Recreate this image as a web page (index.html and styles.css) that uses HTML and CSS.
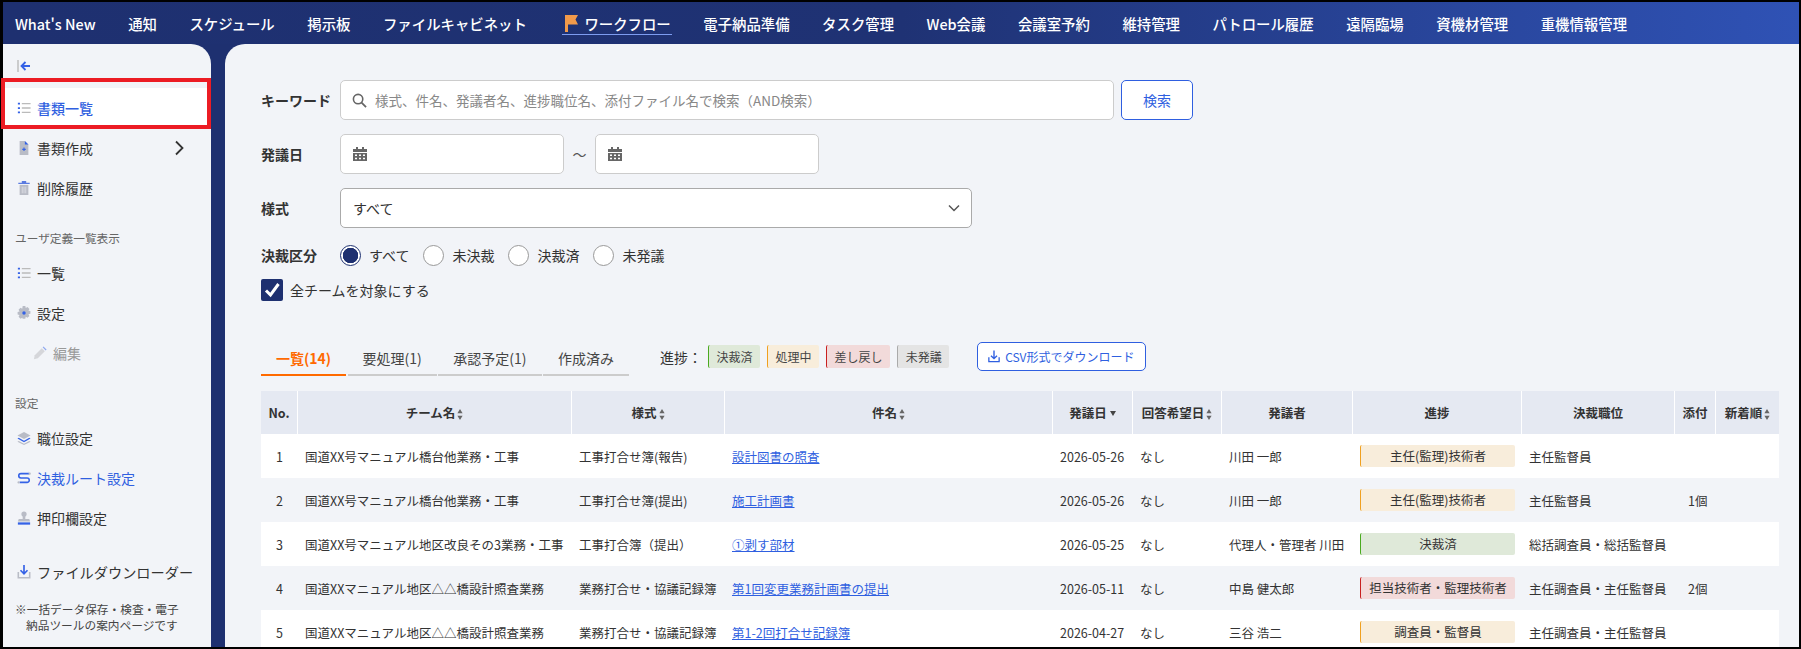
FILE: index.html
```html
<!DOCTYPE html>
<html lang="ja">
<head>
    <meta charset="UTF-8">
    <meta name="viewport" content="width=device-width, initial-scale=1.0">
    <title>ワークフロー</title>
    <link rel="stylesheet" href="styles.css">
</head>
<body>
<svg class="defs" width="0" height="0">
    <symbol id="i-list" viewBox="0 0 16 16">
        <path d="M5.5 3h10M5.5 8h10M5.5 13h10" stroke="#bbb" stroke-width="1.6"/>
        <path d="M1 2h2.4v2H1zM1 7h2.4v2H1zM1 12h2.4v2H1z" fill="#3562e6"/>
    </symbol>
    <symbol id="i-sort" viewBox="0 0 6 11">
        <path d="M3 0l2.6 4.2H.4zM3 11L.4 6.8h5.2z" fill="#666"/>
    </symbol>
    <symbol id="i-cal" viewBox="0 0 14 14">
        <path d="M3 0h2v2.5H3zM9 0h2v2.5H9zM0 2h14v3H0zM0 6h14v8H0z" fill="#666"/>
        <path d="M2 7.5h2v1.6H2zM6 7.5h2v1.6H6zM10 7.5h2v1.6h-2zM2 10.7h2v1.6H2zM6 10.7h2v1.6H6zM10 10.7h2v1.6h-2z" fill="#fff"/>
    </symbol>
</svg>

<div class="app">
    <header class="topnav">
        <a>What's New</a>
        <a>通知</a>
        <a>スケジュール</a>
        <a>掲示板</a>
        <a>ファイルキャビネット</a>
        <a class="topnav-active">
            <svg class="flag" viewBox="0 0 13 17"><path d="M0 0h13l-2.5 4.5L13 9.500H3V17H0z" fill="#f29a4a"/></svg>
            ワークフロー
        </a>
        <a>電子納品準備</a>
        <a>タスク管理</a>
        <a>Web会議</a>
        <a>会議室予約</a>
        <a>維持管理</a>
        <a>パトロール履歴</a>
        <a>遠隔臨場</a>
        <a>資機材管理</a>
        <a>重機情報管理</a>
    </header>

    <div class="layout">
        <aside class="sidebar">
            <div class="collapse">
                <svg class="icon-collapse" viewBox="0 0 14 14">
                    <path d="M1 1v12" stroke="#bbb" stroke-width="1.4"/>
                    <path d="M13 7H5M8.500 3L4.500 7l4 4" stroke="#3562e6" stroke-width="1.8" fill="none"/>
                </svg>
            </div>
            <a class="side-item side-active"><svg class="icon"><use href="#i-list"/></svg>書類一覧</a>
            <a class="side-item">
                <svg class="icon" viewBox="0 0 16 16">
                    <path d="M3 0h6l4 4v12H3z" fill="#b9bcc6"/>
                    <path d="M9 0l4 4H9z" fill="#3562e6"/>
                    <path d="M6 9.500h4M8 7.500v4" stroke="#3562e6" stroke-width="1.300"/>
                </svg>
                書類作成
                <svg class="chevron" viewBox="0 0 10 16"><path d="M2 1.500L8.500 8 2 14.500" stroke="#333" stroke-width="1.800" fill="none"/></svg>
            </a>
            <a class="side-item">
                <svg class="icon" viewBox="0 0 16 16">
                    <path d="M1.500 2h13v1.500h-13zM5.500 0h5v2h-5z" fill="#5b7be0"/>
                    <path d="M3 4.500h10V16H3z" fill="#b9bcc6"/>
                    <path d="M6 6.500v7.500M8 6.500v7.500M10 6.500v7.500" stroke="#e6e7ec" stroke-width=".8"/>
                </svg>
                削除履歴
            </a>

            <div class="side-title">ユーザ定義一覧表示</div>
            <a class="side-item"><svg class="icon"><use href="#i-list"/></svg>一覧</a>
            <a class="side-item">
                <svg class="icon" viewBox="0 0 16 16">
                    <path d="M6.500 0h3l.5 2.200 2-1.100 2.200 2.200-1.100 2 2.200.500v3l-2.200.5 1.100 2-2.200 2.200-2-1.100-.5 2.200h-3L6 13.400l-2 1.100-2.200-2.200 1.100-2L.7 9.800v-3l2.200-.5-1.100-2L4 2.100l2 1.100z" fill="#b9bcc6"/>
                    <circle cx="8" cy="8" r="2" fill="#3562e6"/>
                </svg>
                設定
            </a>
            <a class="side-item side-sub">
                <svg class="icon" viewBox="0 0 16 16">
                    <path d="M1 15l1-4.500L10 2.500l3.500 3.500-8 8z" fill="#d5d6da"/>
                    <path d="M11 1.500l1-1 3.500 3.500-1 1z" fill="#8fa8ee"/>
                </svg>
                編集
            </a>

            <div class="side-title">設定</div>
            <a class="side-item">
                <svg class="icon" viewBox="0 0 16 16">
                    <path d="M8 1l7.500 4L8 9 .5 5z" fill="#b9bcc6"/>
                    <path d="M2 7.800L8 11l6-3.200 1.500.9L8 12.800.5 8.700z" fill="#3562e6"/>
                    <path d="M2 11.300L8 14.500l6-3.200 1.500.9L8 16 .5 12.200z" fill="#b9bcc6"/>
                </svg>
                職位設定
            </a>
            <a class="side-item side-link">
                <svg class="icon" viewBox="0 0 16 16">
                    <path d="M14 3H4.500a2.500 2.500 0 0 0 0 5h7a2.500 2.500 0 0 1 0 5H3" stroke="#3562e6" stroke-width="1.800" fill="none"/>
                    <path d="M13 .8v.1M15 .8" stroke="#b9bcc6"/>
                    <circle cx="1.800" cy="13" r="1.300" fill="#b9bcc6"/>
                    <circle cx="14.500" cy="3" r="1.300" fill="#b9bcc6"/>
                </svg>
                決裁ルート設定
            </a>
            <a class="side-item">
                <svg class="icon" viewBox="0 0 16 16">
                    <circle cx="8" cy="3.500" r="3" fill="#b9bcc6"/>
                    <path d="M6.500 5.500h3V9h4.500L15 12H1l1-3h4.500z" fill="#b9bcc6"/>
                    <path d="M1 13h14v2.600H1z" fill="#3562e6"/>
                </svg>
                押印欄設定
            </a>

            <a class="side-item side-download">
                <svg class="icon" viewBox="0 0 16 16">
                    <path d="M1.500 8v6.500h13V8" stroke="#b9bcc6" stroke-width="1.800" fill="none"/>
                    <path d="M8 0v9.500M4 6l4 4 4-4" stroke="#3562e6" stroke-width="1.900" fill="none"/>
                </svg>
                ファイルダウンローダー
            </a>
            <p class="side-note">※一括データ保存・検査・電子<br><span>納品ツールの案内ページです</span></p>

            <div class="annotation"></div>
        </aside>

        <main class="content">
            <div class="field-row">
                <label class="field-label">キーワード</label>
                <div class="input input-keyword">
                    <svg class="search" viewBox="0 0 16 16"><circle cx="6.500" cy="6.500" r="5" stroke="#666" stroke-width="1.700" fill="none"/><path d="M10.200 10.200L15 15" stroke="#666" stroke-width="1.900"/></svg>
                    <span class="placeholder">様式、件名、発議者名、進捗職位名、添付ファイル名で検索（AND検索）</span>
                </div>
                <button class="btn btn-search">検索</button>
            </div>

            <div class="field-row">
                <label class="field-label">発議日</label>
                <div class="input input-date"><svg class="cal"><use href="#i-cal"/></svg></div>
                <span class="tilde">～</span>
                <div class="input input-date"><svg class="cal"><use href="#i-cal"/></svg></div>
            </div>

            <div class="field-row">
                <label class="field-label">様式</label>
                <div class="input input-select">
                    <span>すべて</span>
                    <svg class="select-arrow" viewBox="0 0 12 8"><path d="M1 1.500l5 5 5-5" stroke="#555" stroke-width="1.500" fill="none"/></svg>
                </div>
            </div>

            <div class="radio-row">
                <label class="field-label">決裁区分</label>
                <span class="radio radio-on"></span><span class="radio-text">すべて</span>
                <span class="radio"></span><span class="radio-text">未決裁</span>
                <span class="radio"></span><span class="radio-text">決裁済</span>
                <span class="radio"></span><span class="radio-text">未発議</span>
            </div>

            <div class="check-row">
                <span class="checkbox"><svg viewBox="0 0 22 22"><path d="M5 11.500l4.500 4.500L17.500 5" stroke="#fff" stroke-width="3" fill="none"/></svg></span>
                全チームを対象にする
            </div>

            <div class="toolbar">
                <div class="tabs">
                    <a class="tab tab-active">一覧(14)</a>
                    <a class="tab">要処理(1)</a>
                    <a class="tab">承認予定(1)</a>
                    <a class="tab">作成済み</a>
                </div>
                <div class="legend">
                    <span class="legend-label">進捗：</span>
                    <span class="legend-item st-done">決裁済</span>
                    <span class="legend-item st-doing">処理中</span>
                    <span class="legend-item st-back">差し戻し</span>
                    <span class="legend-item st-none">未発議</span>
                    <button class="btn btn-csv">
                        <svg viewBox="0 0 14 14"><path d="M1 8v5h12V8" stroke="#2f5fe0" stroke-width="1.500" fill="none"/><path d="M7 0v9M3.500 6L7 9.500 10.500 6" stroke="#2f5fe0" stroke-width="1.600" fill="none"/></svg>
                        CSV形式でダウンロード
                    </button>
                </div>
            </div>

            <table class="doc-table">
                <colgroup>
                    <col class="c-no"><col class="c-team"><col class="c-form"><col class="c-title">
                    <col class="c-date"><col class="c-reply"><col class="c-author"><col class="c-status">
                    <col class="c-role"><col class="c-file"><col class="c-new">
                </colgroup>
                <thead>
                    <tr>
                        <th>No.</th>
                        <th>チーム名<svg class="sort"><use href="#i-sort"/></svg></th>
                        <th>様式<svg class="sort"><use href="#i-sort"/></svg></th>
                        <th>件名<svg class="sort"><use href="#i-sort"/></svg></th>
                        <th>発議日<svg class="sort-down" viewBox="0 0 6 5"><path d="M0 0h6L3 5z" fill="#444"/></svg></th>
                        <th>回答希望日<svg class="sort"><use href="#i-sort"/></svg></th>
                        <th>発議者</th>
                        <th>進捗</th>
                        <th>決裁職位</th>
                        <th>添付</th>
                        <th>新着順<svg class="sort"><use href="#i-sort"/></svg></th>
                    </tr>
                </thead>
                <tbody>
                    <tr>
                        <td class="cell-no">1</td>
                        <td>国道XX号マニュアル橋台他業務・工事</td>
                        <td>工事打合せ簿(報告)</td>
                        <td><a class="doc-link">設計図書の照査</a></td>
                        <td>2026-05-26</td>
                        <td>なし</td>
                        <td>川田 一郎</td>
                        <td><span class="chip st-doing">主任(監理)技術者</span></td>
                        <td>主任監督員</td>
                        <td class="cell-file"></td>
                        <td></td>
                    </tr>
                    <tr>
                        <td class="cell-no">2</td>
                        <td>国道XX号マニュアル橋台他業務・工事</td>
                        <td>工事打合せ簿(提出)</td>
                        <td><a class="doc-link">施工計画書</a></td>
                        <td>2026-05-26</td>
                        <td>なし</td>
                        <td>川田 一郎</td>
                        <td><span class="chip st-doing">主任(監理)技術者</span></td>
                        <td>主任監督員</td>
                        <td class="cell-file">1個</td>
                        <td></td>
                    </tr>
                    <tr>
                        <td class="cell-no">3</td>
                        <td>国道XX号マニュアル地区改良その3業務・工事</td>
                        <td>工事打合簿（提出）</td>
                        <td><a class="doc-link">①剥す部材</a></td>
                        <td>2026-05-25</td>
                        <td>なし</td>
                        <td>代理人・管理者 川田</td>
                        <td><span class="chip st-done">決裁済</span></td>
                        <td>総括調査員・総括監督員</td>
                        <td class="cell-file"></td>
                        <td></td>
                    </tr>
                    <tr>
                        <td class="cell-no">4</td>
                        <td>国道XXマニュアル地区△△橋設計照査業務</td>
                        <td>業務打合せ・協議記録簿</td>
                        <td><a class="doc-link">第1回変更業務計画書の提出</a></td>
                        <td>2026-05-11</td>
                        <td>なし</td>
                        <td>中島 健太郎</td>
                        <td><span class="chip st-back">担当技術者・監理技術者</span></td>
                        <td>主任調査員・主任監督員</td>
                        <td class="cell-file">2個</td>
                        <td></td>
                    </tr>
                    <tr>
                        <td class="cell-no">5</td>
                        <td>国道XXマニュアル地区△△橋設計照査業務</td>
                        <td>業務打合せ・協議記録簿</td>
                        <td><a class="doc-link">第1-2回打合せ記録簿</a></td>
                        <td>2026-04-27</td>
                        <td>なし</td>
                        <td>三谷 浩二</td>
                        <td><span class="chip st-doing">調査員・監督員</span></td>
                        <td>主任調査員・主任監督員</td>
                        <td class="cell-file"></td>
                        <td></td>
                    </tr>
                </tbody>
            </table>
        </main>
    </div>
</div>
</body>
</html>
```

FILE: styles.css
```css
* {
    box-sizing: border-box;
}

html, body {
    height: 100%;
}

body {
    margin: 0;
    padding: 2px 2px 2px 3px;
    background-color: #000;
    font-family: "Noto Sans CJK JP", "Noto Sans", sans-serif;
    font-size: 14px;
    color: #333;
    overflow: hidden;
}

.defs {
    position: absolute;
}

.app {
    display: flex;
    flex-direction: column;
    height: 100%;
    background-color: #1e3070;
}

/* top navigation */
.topnav {
    display: flex;
    align-items: center;
    gap: 32.5px;
    height: 42px;
    flex-shrink: 0;
    padding: 0 12px 0 12px;
    background: linear-gradient(90deg, #1e3070 0%, #1f3274 50%, #2f52b5 100%);
    color: #fff;
    font-size: 14.4px;
    font-weight: 500;
    white-space: nowrap;
}

.topnav-active {
    display: flex;
    align-items: center;
    gap: 6px;
    margin-left: 3px;
    padding: 0 1px 0 3px;
    height: 21px;
    border-bottom: 1px solid #7d9cf0;
    margin-top: 2px;
    margin-right: -1px;
}

.flag {
    width: 13px;
    height: 17px;
}

.layout {
    display: flex;
    flex: 1;
    min-height: 0;
    gap: 14px;
}

/* sidebar */
.sidebar {
    position: relative;
    width: 208px;
    flex-shrink: 0;
    background-color: #f2f4f8;
    border-top-right-radius: 20px;
}

.collapse {
    display: flex;
    align-items: center;
    height: 44px;
    padding-left: 14px;
}

.icon-collapse {
    width: 14px;
    height: 14px;
}

.side-item {
    display: flex;
    align-items: center;
    gap: 6px;
    height: 40px;
    padding-left: 14px;
    color: #333;
    font-size: 14px;
}

.side-item .icon {
    width: 14px;
    height: 14px;
    flex-shrink: 0;
}

.side-active {
    background-color: #fff;
    color: #2f5fe0;
    font-weight: 500;
}

.side-link {
    color: #2f5fe0;
}

.side-sub {
    padding-left: 30px;
    color: #999;
}

.chevron {
    width: 10px;
    height: 16px;
    margin-left: 75px;
}

.side-title {
    height: 30px;
    margin-top: 15px;
    padding-left: 12px;
    font-size: 11.7px;
    line-height: 30px;
    color: #666;
}

.side-download {
    margin-top: 14px;
    font-size: 14.2px;
}

.side-note {
    margin: 9px 0 0;
    padding-left: 12px;
    font-size: 11.7px;
    line-height: 16px;
    color: #444;
}

.side-note span {
    padding-left: 11px;
}

/* red marker drawn on top of the screenshot */
.annotation {
    position: absolute;
    left: -2px;
    top: 34px;
    width: 210px;
    height: 51px;
    border: 4px solid #ec1c24;
}

/* main */
.content {
    flex: 1;
    min-width: 0;
    padding: 36px 20px 0 36px;
    background-color: #f2f4f8;
    border-top-left-radius: 20px;
    overflow: hidden;
}

.field-row {
    display: flex;
    align-items: center;
    margin-bottom: 14px;
}

.field-label {
    width: 79px;
    flex-shrink: 0;
    font-weight: 700;
    color: #333;
}

.input {
    display: flex;
    align-items: center;
    height: 40px;
    background-color: #fff;
    border: 1px solid #ccc;
    border-radius: 5px;
}

.input-keyword {
    width: 774px;
    padding-left: 11px;
}

.search {
    width: 15px;
    height: 15px;
    margin-right: 8px;
}

.placeholder {
    font-size: 13.500px;
    color: #888;
}

.btn {
    background-color: #fff;
    border: 1px solid #2f5fe0;
    border-radius: 5px;
    color: #2f5fe0;
    font-family: inherit;
}

.btn-search {
    width: 72px;
    height: 40px;
    margin-left: 7px;
    font-size: 14px;
}

.input-date {
    width: 224px;
    padding-left: 12px;
}

.cal {
    width: 14px;
    height: 14px;
}

.tilde {
    width: 31px;
    text-align: center;
    color: #555;
}

.input-select {
    justify-content: space-between;
    width: 632px;
    padding: 0 11px 0 12px;
    border-color: #aaa;
}

.select-arrow {
    width: 12px;
    height: 8px;
}

.radio-row {
    display: flex;
    align-items: center;
    height: 24px;
    margin-top: 15px;
}

.radio {
    width: 21px;
    height: 21px;
    flex-shrink: 0;
    background-color: #fff;
    border: 1px solid #999;
    border-radius: 50%;
}

.radio-on {
    border-color: #1e3070;
    background: radial-gradient(circle, #1e3070 0, #1e3070 7.500px, #fff 8px);
}

.radio-text {
    margin: 0 14px 0 8px;
}

.check-row {
    display: flex;
    align-items: center;
    gap: 7px;
    height: 22px;
    margin-top: 12px;
}

.checkbox {
    width: 22px;
    height: 22px;
    background-color: #1e3070;
    border-radius: 2px;
}

.checkbox svg {
    display: block;
    width: 22px;
    height: 22px;
}

/* tabs + legend */
.toolbar {
    display: flex;
    align-items: flex-start;
    margin-top: 40px;
}

.tabs {
    display: flex;
    gap: 1.500px;
}

.tab {
    height: 35px;
    padding: 4px 15px 0;
    border-bottom: 2px solid #ccc;
    color: #444;
    font-size: 14px;
    line-height: 26px;
    white-space: nowrap;
}

.tab-active {
    border-bottom-color: #ff6a00;
    color: #ff6a00;
    font-weight: 700;
}

.legend {
    display: flex;
    align-items: center;
    height: 29px;
    margin-left: 31px;
    margin-top: 1px;
}

.legend-label {
    margin-right: 6px;
}

.legend-item {
    height: 23px;
    margin-right: 7px;
    padding: 0 7.500px;
    border-radius: 2px;
    font-size: 12px;
    line-height: 23px;
    color: #444;
}

.st-done {
    background-color: #dfe9d9;
    border-left: 1px solid #4aaa20;
}

.st-doing {
    background-color: #f8eddb;
    border-left: 1px solid #f0a020;
}

.st-back {
    background-color: #f2dada;
    border-left: 1px solid #c82020;
}

.st-none {
    background-color: #e4e4e4;
    border-left: 1px solid #aaa;
}

.btn-csv {
    display: flex;
    align-items: center;
    gap: 5px;
    height: 29px;
    margin-left: 21px;
    padding: 0 10px;
    font-size: 12px;
    white-space: nowrap;
}

.btn-csv svg {
    width: 12px;
    height: 13px;
}

/* table */
.doc-table {
    width: 1518px;
    margin-top: 15px;
    border-collapse: separate;
    border-spacing: 0;
    table-layout: fixed;
    font-size: 12.500px;
}

.c-no { width: 37px; }
.c-team { width: 274px; }
.c-form { width: 153px; }
.c-title { width: 328px; }
.c-date { width: 80px; }
.c-reply { width: 89px; }
.c-author { width: 131px; }
.c-status { width: 169px; }
.c-role { width: 153px; }
.c-file { width: 41px; }
.c-new { width: 63px; }

.doc-table th {
    height: 43px;
    padding: 0;
    background-color: #e5e9f2;
    border-right: 1px solid #fff;
    color: #333;
    font-weight: 700;
    white-space: nowrap;
}

.doc-table th:last-child {
    border-right: 0;
}

.sort {
    width: 6px;
    height: 11px;
    margin-left: 2px;
    vertical-align: -2px;
}

.sort-down {
    width: 6px;
    height: 5px;
    margin-left: 3px;
    vertical-align: 2px;
}

.doc-table td {
    height: 44px;
    padding: 0 7px;
    white-space: nowrap;
    color: #333;
}

.doc-table tbody tr:nth-child(odd) td {
    background-color: #fff;
}

.doc-table .cell-no {
    padding: 0;
    text-align: center;
}

.doc-table .cell-file {
    padding: 0 0 0 13px;
}

.doc-link {
    color: #2f5fe0;
    text-decoration: underline;
}

.chip {
    display: block;
    height: 22.500px;
    border-radius: 2px;
    line-height: 22.500px;
    text-align: center;
}
```
